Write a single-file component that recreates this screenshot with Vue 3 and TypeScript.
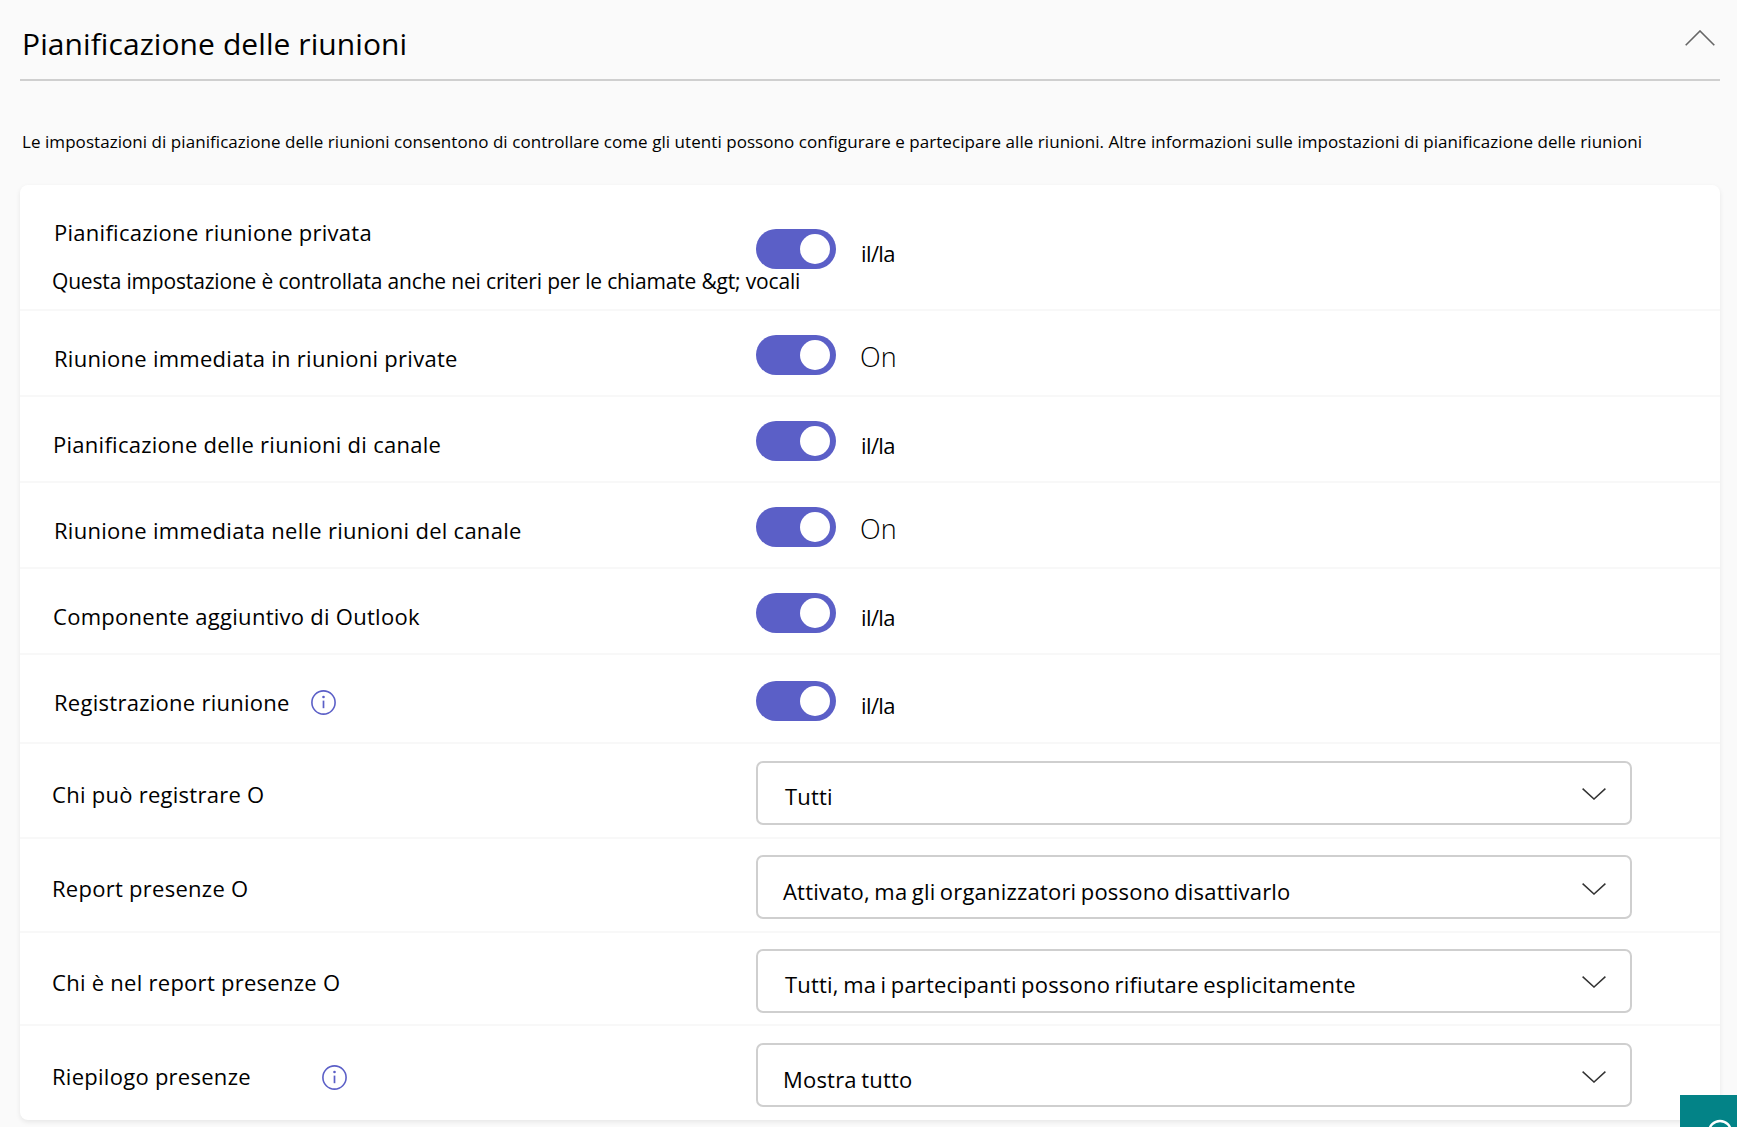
<script setup lang="ts">
interface SettingRow {
  label: string
  sub?: string
  indent: number
  height: number
  info?: number
  toggle?: string
  select?: string
  selectIndent?: number
}

const rows: SettingRow[] = [
  {
    label: 'Pianificazione riunione privata',
    sub: 'Questa impostazione è controllata anche nei criteri per le chiamate &gt; vocali',
    indent: 34,
    height: 126,
    toggle: 'il/la',
  },
  { label: 'Riunione immediata in riunioni private', indent: 34, height: 86, toggle: 'On' },
  { label: 'Pianificazione delle riunioni di canale', indent: 33, height: 86, toggle: 'il/la' },
  { label: 'Riunione immediata nelle riunioni del canale', indent: 34, height: 86, toggle: 'On' },
  { label: 'Componente aggiuntivo di Outlook', indent: 33, height: 86, toggle: 'il/la' },
  { label: 'Registrazione riunione', indent: 34, height: 89, info: 21, toggle: 'il/la' },
  { label: 'Chi può registrare O', indent: 32, height: 95, select: 'Tutti', selectIndent: 27 },
  {
    label: 'Report presenze O',
    indent: 32,
    height: 94,
    select: 'Attivato, ma gli organizzatori possono disattivarlo',
    selectIndent: 25,
  },
  {
    label: 'Chi è nel report presenze O',
    indent: 32,
    height: 93,
    select: 'Tutti, ma i partecipanti possono rifiutare esplicitamente',
    selectIndent: 27,
  },
  { label: 'Riepilogo presenze', indent: 32, height: 94, info: 71, select: 'Mostra tutto', selectIndent: 25 },
]
</script>

<template>
  <div class="page">
    <header class="section-head">
      <h1 class="section-title">Pianificazione delle riunioni</h1>
      <svg class="collapse-icon" viewBox="0 0 30 16" fill="none">
        <path d="M0.7 15.3L15 1l14.3 14.3" stroke="#666" stroke-width="1.6" />
      </svg>
    </header>

    <p class="section-desc">
      Le impostazioni di pianificazione delle riunioni consentono di controllare come gli utenti possono configurare e
      partecipare alle riunioni. Altre informazioni sulle impostazioni di pianificazione delle riunioni
    </p>

    <section class="card">
      <div v-for="row in rows" :key="row.label" class="row" :style="{ height: row.height + 'px' }">
        <div
          class="row-label"
          :class="{ 'row-label-stack': row.sub, 'row-label-up': row.select || row.info }"
          :style="{ paddingLeft: row.indent + 'px' }"
        >
          <span class="label-text">{{ row.label }}</span>
          <svg
            v-if="row.info"
            class="info-icon"
            :style="{ marginLeft: row.info + 'px' }"
            viewBox="0 0 25 25"
            fill="none"
          >
            <circle cx="12.5" cy="12.5" r="11.6" stroke="#5b5fc7" stroke-width="1.6" />
            <circle cx="12.5" cy="7" r="1.3" fill="#5b5fc7" />
            <path d="M12.5 10.6v7.6" stroke="#5b5fc7" stroke-width="1.7" />
          </svg>
          <span v-if="row.sub" class="sub-text">{{ row.sub }}</span>
        </div>

        <div v-if="row.toggle" class="toggle-cell">
          <span class="switch"><span class="knob"></span></span>
          <span class="toggle-text" :class="{ 'toggle-on': row.toggle === 'On' }">{{ row.toggle }}</span>
        </div>

        <div v-else class="select" :style="{ paddingLeft: row.selectIndent + 'px' }">
          <span class="select-text">{{ row.select }}</span>
          <svg class="select-arrow" viewBox="0 0 24 12" fill="none">
            <path d="M0.6 0.6L12 11l11.4-10.4" stroke="#333" stroke-width="1.5" />
          </svg>
        </div>
      </div>
    </section>

    <button class="help-button" aria-label="Guida">
      <svg viewBox="0 0 57 32" fill="none">
        <circle cx="40" cy="37" r="11" stroke="#fff" stroke-width="2.4" />
      </svg>
    </button>
  </div>
</template>

<style>
html,
body {
  margin: 0;
  background: #fafafa;
}
</style>

<style scoped>
.page {
  position: relative;
  height: 1127px;
  overflow: hidden;
  background: #fafafa;
  color: #000;
  font-family: 'Open Sans', 'Noto Sans', sans-serif;
}

.section-head {
  display: flex;
  align-items: center;
  justify-content: space-between;
  height: 79px;
  margin: 0 17px 0 20px;
  padding: 0 5px 0 2px;
  border-bottom: 2px solid #cfcfcf;
}

.section-title {
  margin: 0;
  padding-top: 8px;
  font-size: 30px;
  font-weight: 400;
  line-height: 40px;
  letter-spacing: 0.08px;
}

.collapse-icon {
  width: 30px;
  height: 16px;
  margin-bottom: 3px;
}

.section-desc {
  height: 104px;
  margin: 0;
  padding: 50px 0 0 22px;
  box-sizing: border-box;
  font-size: 17px;
  line-height: 22px;
  letter-spacing: 0.055px;
  white-space: nowrap;
}

.card {
  margin: 0 17px 0 20px;
  background: #fff;
  border-radius: 8px;
  box-shadow: 0 2px 5px rgba(0, 0, 0, 0.08);
}

.row {
  display: grid;
  grid-template-columns: 736px 876px;
  align-items: center;
  box-sizing: border-box;
  padding-top: 4px;
  border-bottom: 2px solid #f8f8f8;
}

.row:last-child {
  border-bottom: 0;
}

.row-label {
  display: flex;
  align-items: center;
  margin-top: 6px;
  font-size: 22px;
  line-height: 30px;
  letter-spacing: 0.27px;
  white-space: nowrap;
}

.row-label-up {
  margin-top: 2px;
}

.row-label-stack {
  flex-wrap: wrap;
  margin-top: 14px;
}

.label-text {
  flex: 0 0 auto;
}

.sub-text {
  flex: 0 0 100%;
  margin: 19px 0 0 -2px;
  font-size: 21px;
  letter-spacing: -0.17px;
}

.info-icon {
  flex: 0 0 auto;
  width: 25px;
  height: 25px;
  margin-top: 2px;
}

.toggle-cell {
  display: flex;
  align-items: center;
  gap: 25px;
}

.switch {
  display: flex;
  align-items: center;
  justify-content: flex-end;
  width: 80px;
  height: 40px;
  padding-right: 6px;
  box-sizing: border-box;
  border-radius: 20px;
  background: #5b5fc7;
}

.knob {
  width: 30px;
  height: 30px;
  border-radius: 50%;
  background: #fff;
}

.toggle-text {
  margin-top: 8px;
  font-size: 22px;
  letter-spacing: -0.6px;
}

.toggle-on {
  margin-top: 2px;
  margin-left: -1px;
  font-size: 27px;
  font-weight: 300;
  letter-spacing: 0;
}

.select {
  display: flex;
  align-items: center;
  justify-content: space-between;
  height: 64px;
  box-sizing: border-box;
  padding-right: 24px;
  border: 2px solid #cfcfcf;
  border-radius: 7px;
  background: #fff;
  font-size: 22px;
  letter-spacing: 0.2px;
  word-spacing: -1.5px;
}

.select-text {
  margin-top: 7px;
}

.select-arrow {
  width: 24px;
  height: 12px;
  margin-top: 3px;
}

.help-button {
  position: absolute;
  right: 0;
  bottom: 0;
  width: 57px;
  height: 32px;
  padding: 0;
  border: 0;
  background: #038387;
}

.help-button svg {
  display: block;
  width: 57px;
  height: 32px;
}
</style>
